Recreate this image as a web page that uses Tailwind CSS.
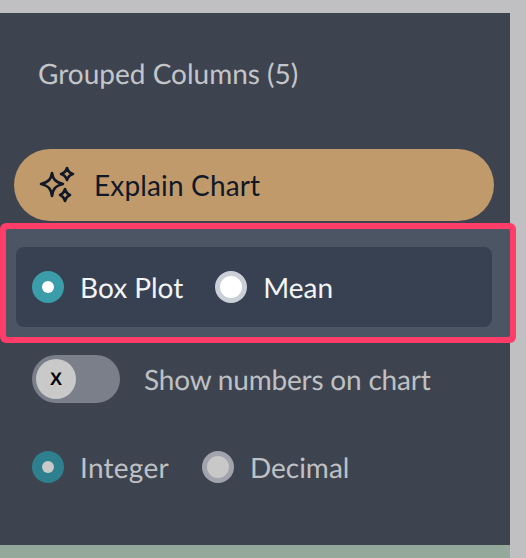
<!DOCTYPE html>
<html lang="en">
<head>
    <meta charset="UTF-8">
    <title>Chart Options</title>
    <script src="https://cdn.jsdelivr.net/npm/@tailwindcss/browser@4"></script>
</head>
<body class="bg-[#c0bfc1] h-[558px] overflow-hidden font-['Lato',sans-serif] [text-rendering:geometricPrecision]">
    <div class="pt-[13px] w-[510px]">
        <div class="bg-[#3d4450] h-[532px] flex flex-col">
            <p class="pl-[38px] pt-[43px] h-[136px] text-[28px] leading-[34px] text-[#c4c5c8]">Grouped Columns (5)</p>

            <button class="mx-[14px] h-[72px] w-[480px] shrink-0 rounded-full bg-[#c19a6b] flex items-center pl-[25px] gap-[17px] text-[28px] tracking-[0.15px] text-[#111827]">
                <svg class="w-[38px] h-[40px]" viewBox="0 0 38 40" fill="none" stroke="#111827" stroke-width="2.6" stroke-linejoin="round">
                    <path d="M13 8 C14 14 16 17 24 19 C16 21 14 24 13 31 C12 24 10 21 2 19 C10 17 12 14 13 8 Z"/>
                    <path d="M28 3 C29 6 30 8 34 9 C30 10 29 12 28 15 C27 12 26 10 22 9 C26 8 27 6 28 3 Z"/>
                    <path d="M26 24 C27 27 28 29 31 30 C28 31 27 33 26 36 C25 33 24 31 21 30 C24 29 25 27 26 24 Z"/>
                </svg>
                Explain Chart
            </button>

            <div class="mt-[8px] ml-[6px] h-[108px] w-[504px] shrink-0 bg-[#4b5563] rounded-[2px] ring-[6px] ring-[#ff3d68] pt-[18px] pl-[10px]">
                <div class="w-[476px] h-[80px] bg-[#384152] rounded-[8px] flex items-center pl-[16px] text-[28px] text-[#f3f4f6]">
                    <span class="w-[32px] h-[32px] rounded-full bg-[#3a9da9] flex items-center justify-center">
                        <span class="w-[12px] h-[12px] rounded-full bg-white"></span>
                    </span>
                    <span class="ml-[16px]">Box Plot</span>
                    <span class="ml-[32px] w-[32px] h-[32px] rounded-full bg-white border-[5px] border-[#cbd0d8]"></span>
                    <span class="ml-[16px]">Mean</span>
                </div>
            </div>

            <div class="mt-[18px] ml-[32px] flex items-center h-[48px]">
                <span class="w-[88px] h-[48px] rounded-full bg-[#7b7f89] pl-[4px] flex items-center">
                    <span class="w-[40px] h-[40px] rounded-full bg-[#c9c9c9] flex items-center justify-center text-[18px] font-bold text-black font-['Liberation_Sans',sans-serif]">X</span>
                </span>
                <span class="ml-[24px] text-[28px] tracking-[-0.2px] text-[#bfc0c3]">Show numbers on chart</span>
            </div>

            <div class="mt-[48px] ml-[32px] flex items-center h-[32px] text-[28px] text-[#bfc0c3]">
                <span class="w-[32px] h-[32px] rounded-full bg-[#2f808e] flex items-center justify-center">
                    <span class="w-[12px] h-[12px] rounded-full bg-[#c9c9c9]"></span>
                </span>
                <span class="ml-[16px] tracking-[0.25px]">Integer</span>
                <span class="ml-[33px] w-[32px] h-[32px] rounded-full bg-[#c8c8c8] border-[5px] border-[#a1a4ac]"></span>
                <span class="ml-[16px]">Decimal</span>
            </div>
        </div>
        <div class="bg-[#94a99b] h-[13px]"></div>
    </div>
</body>
</html>
